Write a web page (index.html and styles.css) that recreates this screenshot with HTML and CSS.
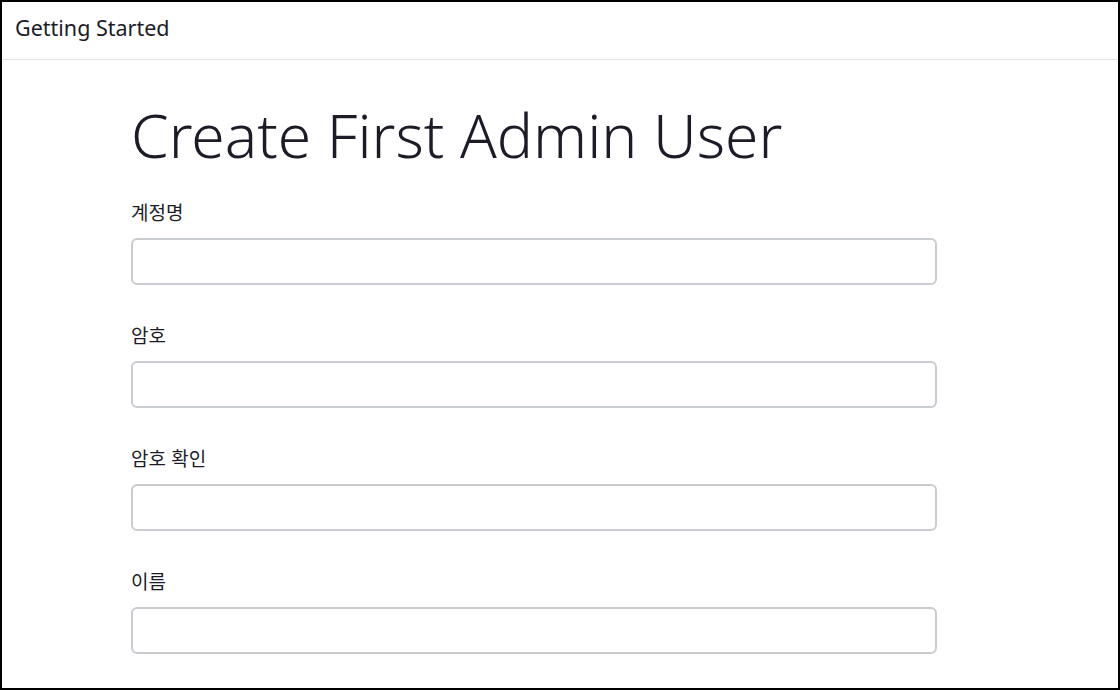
FILE: index.html
```html
<!DOCTYPE html>
<html lang="ko">
<head>
<meta charset="utf-8">
<title>Getting Started</title>
<link rel="stylesheet" href="styles.css">
</head>
<body>
<div class="frame">
  <header class="topbar">Getting Started</header>
  <main class="content">
    <h1 class="title">Create First Admin User</h1>
    <form class="form">
      <div class="group">
        <label class="label" for="f1">계정명</label>
        <input class="input" id="f1" type="text">
      </div>
      <div class="group">
        <label class="label" for="f2">암호</label>
        <input class="input" id="f2" type="password">
      </div>
      <div class="group">
        <label class="label" for="f3">암호 확인</label>
        <input class="input" id="f3" type="password">
      </div>
      <div class="group">
        <label class="label" for="f4">이름</label>
        <input class="input" id="f4" type="text">
      </div>
    </form>
  </main>
</div>
</body>
</html>
```
FILE: styles.css
```css
* { box-sizing: border-box; }
html, body { margin: 0; padding: 0; }
body {
  font-family: "Noto Sans", "Noto Sans CJK KR", sans-serif;
  color: #1c1c28;
  background: #fff;
}
.frame {
  width: 1120px;
  height: 690px;
  border: 2px solid #000;
  overflow: hidden;
  display: flex;
  flex-direction: column;
}
.topbar {
  height: 58px;
  flex: none;
  border-bottom: 1px solid #e5e5e5;
  padding-left: 13px;
  display: flex;
  align-items: center;
  font-size: 21.5px;
  padding-bottom: 6px;
}
.content {
  padding-left: 129px;
  padding-top: 37px;
}
.title {
  margin: 0 0 26px 0;
  font-size: 60.5px;
  font-weight: 300;
  line-height: 76px;
}
.form { display: flex; flex-direction: column; gap: 37px; width: 806px; }
.group { display: flex; flex-direction: column; gap: 13px; }
.label {
  font-family: "Noto Sans CJK KR", sans-serif;
  font-size: 19px;
  line-height: 26px;
}
.input {
  height: 47px;
  width: 100%;
  border: 2px solid #c9ccd1;
  border-radius: 6px;
  background: #fff;
  font-size: 16px;
  padding: 0 12px;
}
```
